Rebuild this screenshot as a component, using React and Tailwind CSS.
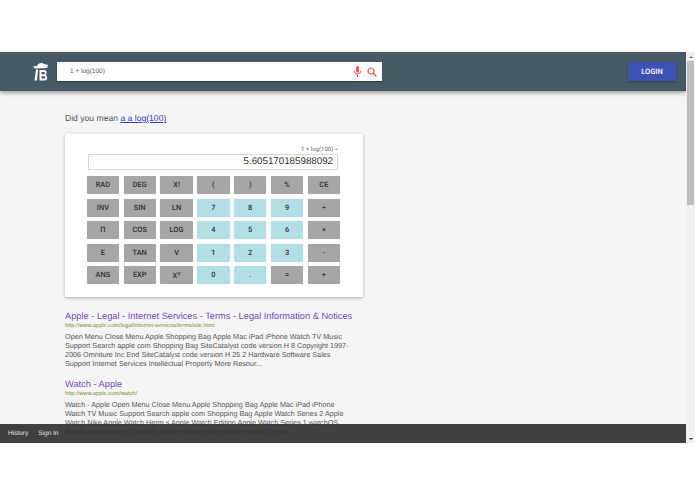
const rows = [
  [["RAD",0],["DEG",0],["X!",0],["(",0],[")",0],["%",0],["CE",0]],
  [["INV",0],["SIN",0],["LN",0],["7",1],["8",1],["9",1],["÷",0]],
  [["Π",0],["COS",0],["LOG",0],["4",1],["5",1],["6",1],["×",0]],
  [["E",0],["TAN",0],["V",0],["1",1],["2",1],["3",1],["-",0]],
  [["ANS",0],["EXP",0],["XY",0],["0",1],[".",1],["=",0],["+",0]],
];

function Key({ label, light }) {
  return (
    <div className={`w-[32.4px] h-[18px] rounded-[1px] flex items-center justify-center font-['Roboto',sans-serif] text-[7.4px] font-medium text-[#2f2f2f] shadow-[0_0_1px_rgba(0,0,0,0.25)] ${light ? "bg-[#b2dfe6]" : "bg-[#a6a6a6]"}`}>
      {label === "XY" ? <span className="pt-[2px]">X<sup className="text-[5.5px]">Y</sup></span> : label}
    </div>
  );
}

function Result({ title, url, lines, className }) {
  return (
    <div className={className}>
      <div className="text-[9.25px] leading-[12px] text-[#7e45c4]">{title}</div>
      <div className="text-[5.7px] leading-[8px] text-[#7a8a2a]">{url}</div>
      <div className="text-[7.24px] leading-[9.1px] text-[#555] mt-[1.5px] w-[290px]">
        {lines.map((l) => <div key={l} className="whitespace-nowrap">{l}</div>)}
      </div>
    </div>
  );
}

export default function App() {
  return (
    <div className="w-[695px] h-[494px] bg-white overflow-hidden font-['Liberation_Sans',Arial,sans-serif] [text-rendering:geometricPrecision]">
      <div className="h-[52px]" />
      <div className="relative h-[391px] flex bg-[#f5f5f5] overflow-hidden">
        <div className="w-[686px] shrink-0">
          <header className="h-[39px] bg-[#455a64] shadow-[0_2px_4px_rgba(0,0,0,0.35)] flex items-center pl-[33px] pr-[10px]">
            <svg width="16" height="20" viewBox="0 0 16 20" className="shrink-0">
              <path d="M0 4.5 L4 4 C5 1 9 0 11 2 L15 3 L14 6 L2 6.5 Z" fill="#fff" />
              <path d="M3 7.5 H5 L4 18.5 H1.5 Z" fill="#fff" />
              <path d="M6.5 8 H11.5 C14 8 14.5 12 12.5 13 C15 14 15 18.5 11.5 18.5 H6.5 Z M8.5 10 V12.3 H11 C12.2 12.3 12.2 10 11 10 Z M8.5 14.2 V16.6 H11.3 C12.8 16.6 12.8 14.2 11.3 14.2 Z" fill="#fff" fillRule="evenodd" />
            </svg>
            <div className="ml-[8px] w-[325px] h-[19px] bg-white shadow-[0_1px_1px_rgba(0,0,0,0.3)] flex items-center pl-[13px] pr-[5px] text-[6.5px] text-[#555]">
              <span className="flex-1">1 + log(100)</span>
              <svg width="9" height="11" viewBox="0 0 9 11" className="mr-[5px]">
                <rect x="3" y="0" width="3" height="6.5" rx="1.5" fill="#ef5350" />
                <path d="M1 4.5 C1 9 8 9 8 4.5" stroke="#ef5350" strokeWidth="1" fill="none" />
                <rect x="4" y="8" width="1" height="3" fill="#ef5350" />
              </svg>
              <svg width="10" height="10" viewBox="0 0 10 10">
                <circle cx="4" cy="4" r="3" stroke="#ef5350" strokeWidth="1.2" fill="none" />
                <path d="M6.2 6.2 L9.3 9.3" stroke="#ef5350" strokeWidth="1.4" />
              </svg>
            </div>
            <div className="ml-auto w-[48px] h-[19px] bg-[#3f51b5] rounded-[1px] shadow-[0_1px_2px_rgba(0,0,0,0.3)] flex items-center justify-center font-['Roboto',sans-serif] text-[7.5px] font-bold text-[#e8eaf6]">LOGIN</div>
          </header>

          <div className="pl-[65px]">
            <div className="mt-[21px] h-[12px] text-[8.6px] leading-[12px] text-[#555]">
              Did you mean <span className="text-[#3a3ad8] underline">a a log(100)</span>
            </div>

            <div className="mt-[10px] w-[298px] h-[163px] bg-white shadow-[0_1px_3px_rgba(0,0,0,0.3)] pt-[12px]">
              <div className="h-[8px] text-right pr-[25px] font-['Roboto',sans-serif] text-[6px] leading-[8px] text-[#666]">1 + log(100) =</div>
              <div className="ml-[23px] w-[250px] h-[16px] border border-[#d8d8d8] flex items-center justify-end pr-[4px] text-[9.75px] text-[#333]">5.605170185988092</div>
              <div className="mt-[6px] ml-[21.7px] flex flex-col gap-[4.5px]">
                {rows.map((r, i) => (
                  <div key={i} className="flex gap-[4.45px]">
                    {r.map(([l, light]) => <Key key={l} label={l} light={light} />)}
                  </div>
                ))}
              </div>
            </div>

            <Result
              className="mt-[13px]"
              title="Apple - Legal - Internet Services - Terms - Legal Information & Notices"
              url="http://www.apple.com/legal/internet-services/terms/site.html"
              lines={[
                "Open Menu Close Menu Apple Shopping Bag Apple Mac iPad iPhone Watch TV Music",
                "Support Search apple com Shopping Bag SiteCatalyst code version H 8 Copyright 1997-",
                "2006 Omniture Inc End SiteCatalyst code version H 25 2 Hardware Software Sales",
                "Support Internet Services Intellectual Property More Resour...",
              ]}
            />
            <Result
              className="mt-[10.5px]"
              title="Watch - Apple"
              url="http://www.apple.com/watch/"
              lines={[
                "Watch - Apple Open Menu Close Menu Apple Shopping Bag Apple Mac iPad iPhone",
                "Watch TV Music Support Search apple com Shopping Bag Apple Watch Series 2 Apple",
                "Watch Nike Apple Watch Herm s Apple Watch Edition Apple Watch Series 1 watchOS",
                "Bands Accessories Compare Apple Watch Apple Watch Series 2 Lear...",
              ]}
            />
          </div>
        </div>

        <div className="w-[9px] bg-[#f1f1f1] flex flex-col items-center">
          <div className="h-[9px] w-full flex items-center justify-center">
            <div className="w-0 h-0 border-x-[2px] border-x-transparent border-b-[2px] border-b-[#777]" />
          </div>
          <div className="w-[7px] h-[144px] bg-[#bdbdbd]" />
          <div className="mt-auto h-[9px] w-full flex items-center justify-center">
            <div className="w-0 h-0 border-x-[2px] border-x-transparent border-t-[2px] border-t-[#333]" />
          </div>
        </div>

        <div className="absolute left-0 bottom-0 w-[686px] h-[19px] bg-[rgba(50,50,50,0.93)] flex items-center pl-[8px] gap-[10px] text-[6.5px] text-[#e4e4e4]">
          <span>History</span>
          <span>Sign In</span>
        </div>
      </div>
    </div>
  );
}
